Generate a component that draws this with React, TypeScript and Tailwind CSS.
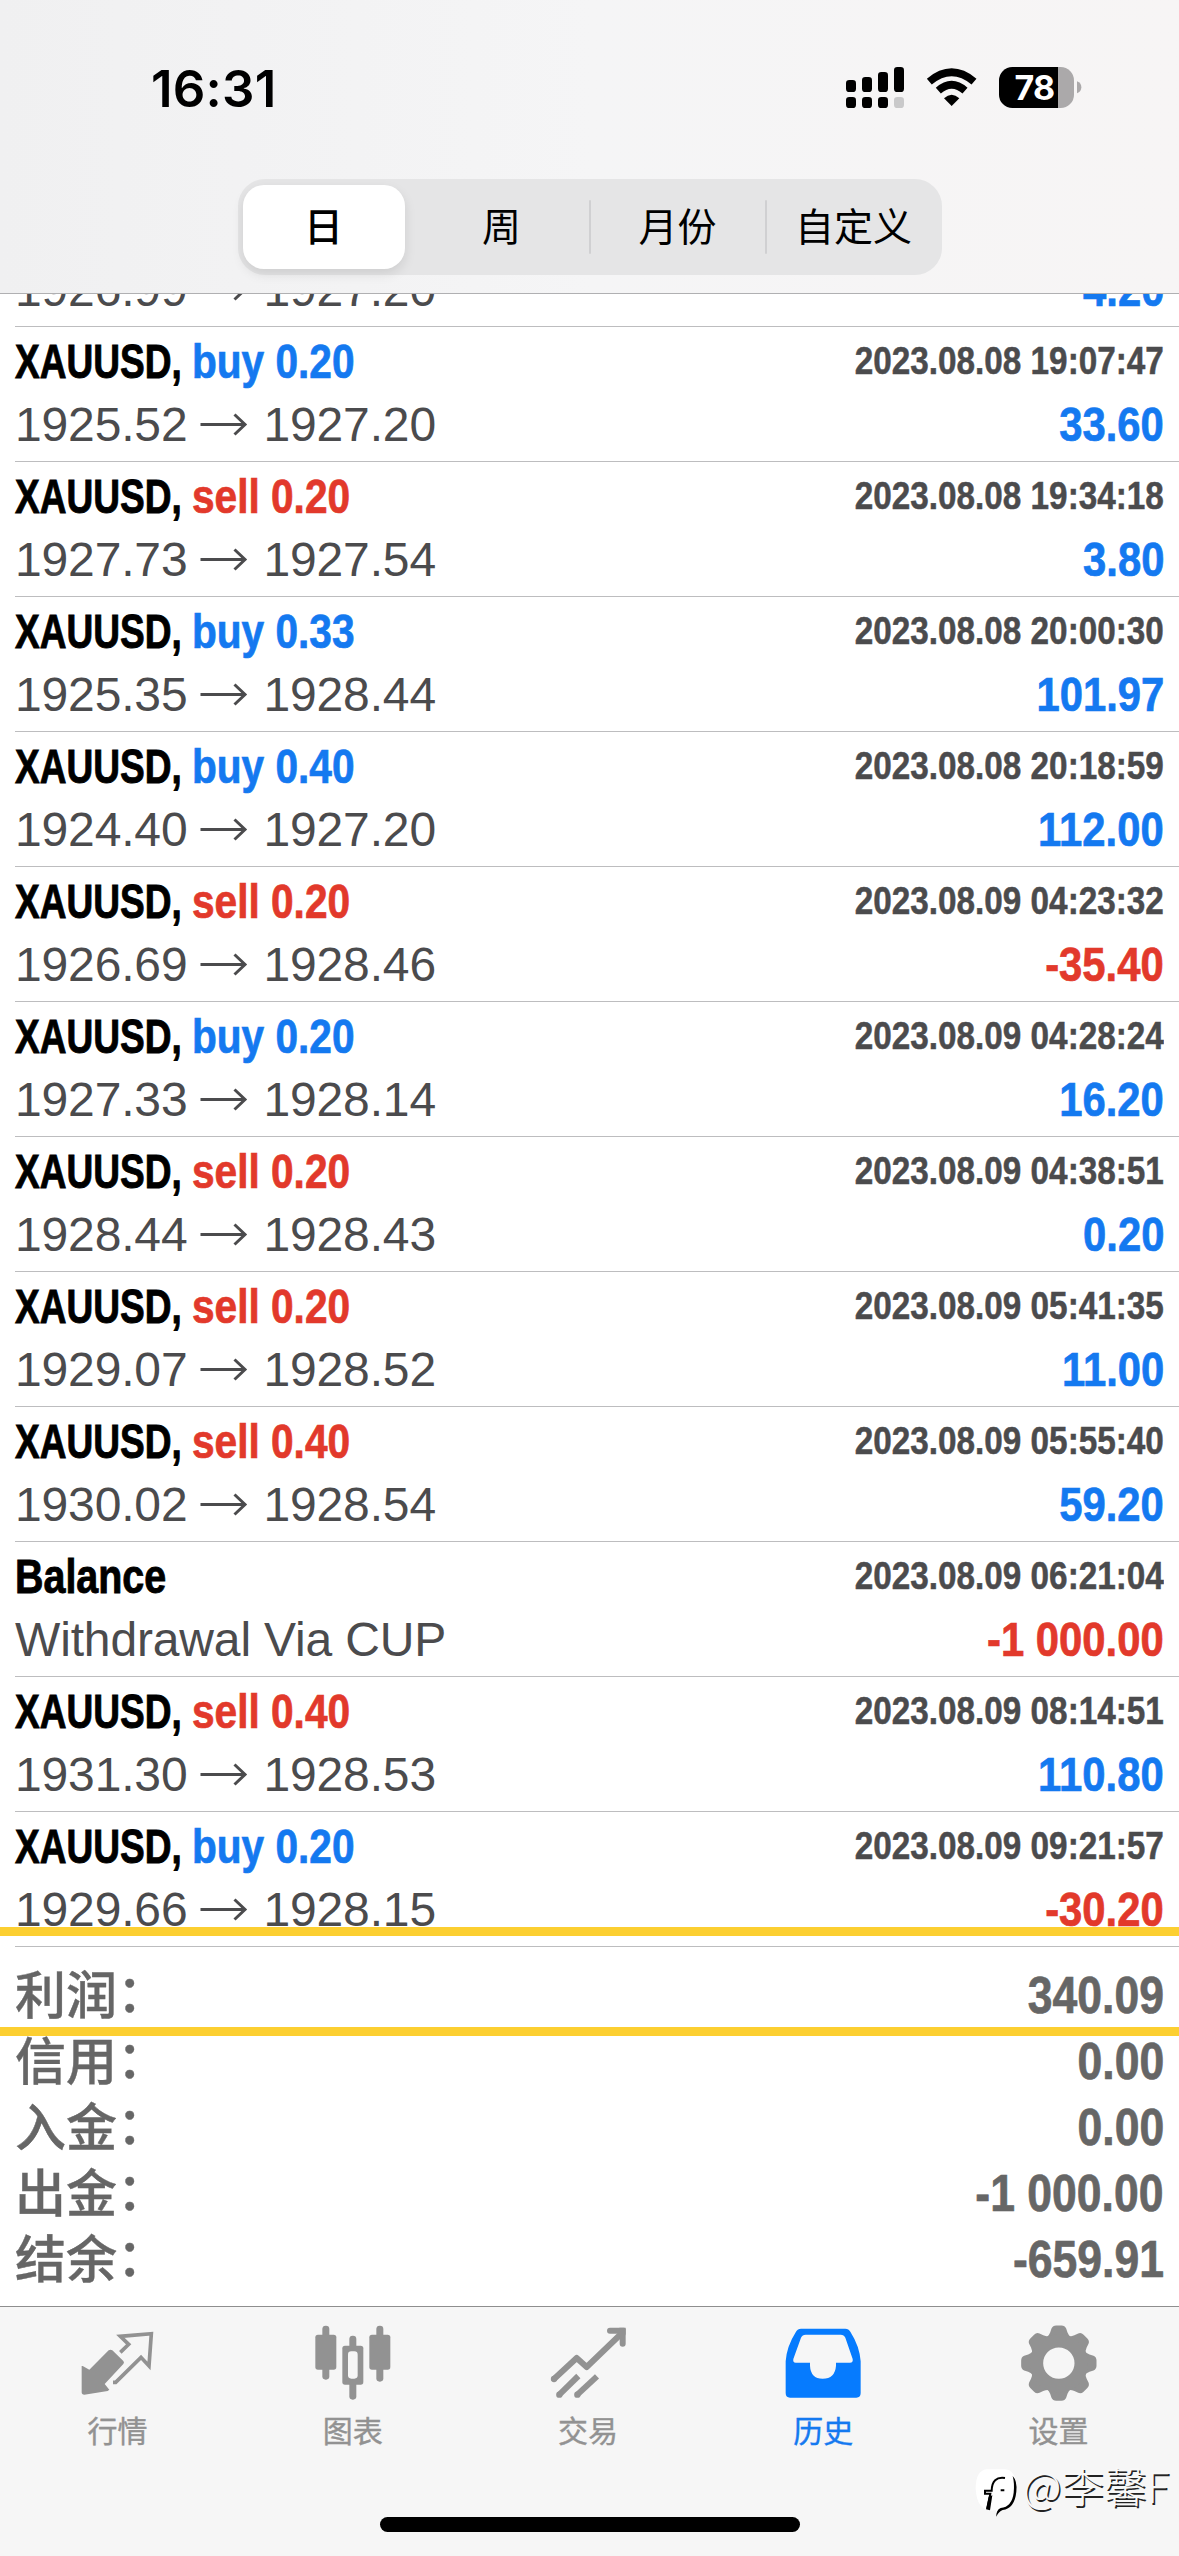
import type { ReactNode } from 'react'
import clsx from 'clsx'

type Deal = {
  side?: 'buy' | 'sell'
  volume?: string
  from?: string
  to?: string
  note?: string
  time: string
  profit: string
}

const deals: Deal[] = [
  { side: 'buy', volume: '0.20', from: '1926.99', to: '1927.20', time: '2023.08.08 18:52:10', profit: '4.20' },
  { side: 'buy', volume: '0.20', from: '1925.52', to: '1927.20', time: '2023.08.08 19:07:47', profit: '33.60' },
  { side: 'sell', volume: '0.20', from: '1927.73', to: '1927.54', time: '2023.08.08 19:34:18', profit: '3.80' },
  { side: 'buy', volume: '0.33', from: '1925.35', to: '1928.44', time: '2023.08.08 20:00:30', profit: '101.97' },
  { side: 'buy', volume: '0.40', from: '1924.40', to: '1927.20', time: '2023.08.08 20:18:59', profit: '112.00' },
  { side: 'sell', volume: '0.20', from: '1926.69', to: '1928.46', time: '2023.08.09 04:23:32', profit: '-35.40' },
  { side: 'buy', volume: '0.20', from: '1927.33', to: '1928.14', time: '2023.08.09 04:28:24', profit: '16.20' },
  { side: 'sell', volume: '0.20', from: '1928.44', to: '1928.43', time: '2023.08.09 04:38:51', profit: '0.20' },
  { side: 'sell', volume: '0.20', from: '1929.07', to: '1928.52', time: '2023.08.09 05:41:35', profit: '11.00' },
  { side: 'sell', volume: '0.40', from: '1930.02', to: '1928.54', time: '2023.08.09 05:55:40', profit: '59.20' },
  { note: 'Withdrawal Via CUP', time: '2023.08.09 06:21:04', profit: '-1 000.00' },
  { side: 'sell', volume: '0.40', from: '1931.30', to: '1928.53', time: '2023.08.09 08:14:51', profit: '110.80' },
  { side: 'buy', volume: '0.20', from: '1929.66', to: '1928.15', time: '2023.08.09 09:21:57', profit: '-30.20' },
]

const summary = [
  ['利润', '340.09'],
  ['信用', '0.00'],
  ['入金', '0.00'],
  ['出金', '-1 000.00'],
  ['结余', '-659.91'],
]

const periods = ['日', '周', '月份', '自定义']

const StatusIcons = () => (
  <svg width="250" height="65" viewBox="0 0 750 195">
    {/* Signal, two SIM lines */}
    <g fill="#000">
      <rect x="18" y="75" width="30" height="36" rx="10" />
      <rect x="66" y="66" width="30" height="45" rx="10" />
      <rect x="114" y="51" width="30" height="60" rx="10" />
      <rect x="162" y="36" width="30" height="75" rx="10" />
      <rect x="18" y="126" width="30" height="33" rx="10" />
      <rect x="66" y="126" width="30" height="33" rx="10" />
      <rect x="114" y="126" width="30" height="33" rx="10" />
      <rect x="162" y="126" width="30" height="33" rx="10" fill="#c9c9ca" />
    </g>
    {/* Wi-Fi */}
    <path d="M335 153L312 130Q335 108 358 130Z" fill="#000" />
    <path d="M295 107Q335 72 375 107" stroke="#000" strokeWidth="23" fill="none" />
    <path d="M268 80Q335 24 402 80" stroke="#000" strokeWidth="23" fill="none" />
    {/* Battery */}
    <clipPath id="battery">
      <rect x="477" y="36" width="225" height="123" rx="40" />
    </clipPath>
    <g clipPath="url(#battery)">
      <rect x="477" y="36" width="177" height="123" fill="#000" />
      <rect x="654" y="36" width="50" height="123" fill="#aba9aa" />
    </g>
    <path d="M711 79Q724 84 724 97Q724 110 711 115Z" fill="#aba9aa" />
    <text x="583" y="135" fill="#fff" fontSize="102" fontWeight="700" textAnchor="middle" letterSpacing="-3" className="font-['Inter',sans-serif]">
      78
    </text>
  </svg>
)

const QuotesIcon = () => (
  <svg width="80" height="80" viewBox="233 100 240 240">
    <path d="M247 229L267 240L325 182Q331 178 336 182L369 214Q373 219 369 223L313 283L327 300L322 304L252 315Q244 315 244 308V229Z" fill="#929292" />
    <path d="M360 188L385 164L360 140L453 132L446 229L422 203L346 278H338" fill="none" stroke="#929292" strokeWidth="11" />
  </svg>
)

const ChartIcon = () => (
  <svg width="80" height="80" viewBox="938 100 240 240" fill="#929292">
    <rect x="966" y="108" width="21" height="162" rx="10" />
    <rect x="945" y="135" width="63" height="105" rx="8" />
    <rect x="1128" y="108" width="21" height="168" rx="10" />
    <rect x="1107" y="135" width="63" height="105" rx="8" />
    <rect x="1047" y="138" width="21" height="192" rx="10" />
    <rect x="1026" y="168" width="63" height="117" rx="8" />
    <rect x="1043" y="185" width="29" height="82" rx="10" fill="#f6f6f6" />
  </svg>
)

const TradeIcon = () => (
  <svg width="80" height="80" viewBox="324 100 240 240" fill="none" stroke="#929292" strokeWidth="18">
    <path d="M342 268L410 205L440 232L546 130" strokeLinejoin="round" />
    <path d="M510 123H548V162" strokeLinecap="round" />
    <path d="M358 315L415 259" />
    <path d="M412 315L471 260" />
    <g fill="#929292" stroke="none">
      <circle cx="342" cy="268" r="9.5" />
      <circle cx="358" cy="315" r="9.5" />
      <circle cx="412" cy="315" r="9.5" />
      <rect x="534" y="114" width="23" height="24" rx="5" />
    </g>
  </svg>
)

const HistoryIcon = () => (
  <svg width="80" height="80" viewBox="1030 100 240 240">
    <path
      d="M1084 117H1217Q1227 117 1232 126Q1260 170 1263 215V310Q1263 324 1250 324H1051Q1038 324 1038 310V215Q1041 170 1069 126Q1074 117 1084 117ZM1098 135Q1088 135 1084 144L1061 208Q1059 219 1068 219H1111V228Q1113 267 1149 267Q1186 267 1189 228V219H1231Q1241 219 1239 208L1217 144Q1213 135 1203 135Z"
      fill="#067bfe"
      fillRule="evenodd"
    />
  </svg>
)

const SettingsIcon = () => (
  <svg width="80" height="80" viewBox="416 100 240 240" fill="#929292">
    <g transform="translate(538.5 220.5)">
      {[0, 45, 90, 135, 180, 225, 270, 315].map((deg) => (
        <path key={deg} transform={`rotate(${deg})`} d="M-36 -78Q-30 -82 -26 -92L-22 -104Q-18 -113 -8 -113H8Q18 -113 22 -104L26 -92Q30 -82 36 -78L30 -60H-30Z" />
      ))}
      <circle r="67" fill="none" stroke="#929292" strokeWidth="40" />
    </g>
  </svg>
)

const tabs: { label: string; icon: ReactNode; active?: boolean }[] = [
  { label: '行情', icon: <QuotesIcon /> },
  { label: '图表', icon: <ChartIcon /> },
  { label: '交易', icon: <TradeIcon /> },
  { label: '历史', icon: <HistoryIcon />, active: true },
  { label: '设置', icon: <SettingsIcon /> },
]

const Arrow = () => (
  <svg width="48" height="38" viewBox="0 0 48 38" fill="none" stroke="#4b4b4d" strokeWidth="3">
    <path d="M0.500 18.500H45M34.500 8.500L45 18.500L34.500 28.500" />
  </svg>
)

const DealRow = ({ deal }: { deal: Deal }) => (
  <div className="h-[135px] shrink-0 border-b border-[#bdbdbf] pt-[3px] pr-[15px] leading-[63px]">
    <div className="flex items-center justify-between font-bold whitespace-nowrap">
      <div className="flex text-[47.500px]">
        {deal.side ? (
          <>
            <span className="w-[177px] origin-left scale-x-[0.78] [-webkit-text-stroke:0.9px]">XAUUSD,</span>
            <span className={clsx('origin-left scale-x-[0.855] [-webkit-text-stroke:0.7px]', deal.side === 'buy' ? 'text-[#1479f0]' : 'text-[#e2392b]')}>
              {deal.side} {deal.volume}
            </span>
          </>
        ) : (
          <span className="origin-left scale-x-[0.83] [-webkit-text-stroke:0.9px]">Balance</span>
        )}
      </div>
      <span className="origin-right scale-x-[0.876] text-[38px] text-[#4b4b4d] [-webkit-text-stroke:0.5px]">{deal.time}</span>
    </div>
    <div className="flex items-center justify-between whitespace-nowrap">
      <div className="flex items-center text-[48px] tracking-[-0.150px] text-[#4b4b4d]">
        {deal.note ?? (
          <>
            <span>{deal.from}</span>
            <span className="mr-[15px] ml-[13px]">
              <Arrow />
            </span>
            <span>{deal.to}</span>
          </>
        )}
      </div>
      <span
        className={clsx(
          'origin-right scale-x-[0.88] text-[47.500px] font-bold [-webkit-text-stroke:0.7px]',
          deal.profit.startsWith('-') ? 'text-[#e2392b]' : 'text-[#1479f0]',
        )}
      >
        {deal.profit}
      </span>
    </div>
  </div>
)

export default function App() {
  return (
    <div className="relative flex h-[2556px] w-[1179px] flex-col overflow-hidden bg-white font-['Liberation_Sans','Noto_Sans_CJK_SC',sans-serif] text-black">
      {/* Header */}
      <header className="flex h-[294px] shrink-0 flex-col items-center border-b border-[#b0b0b2] bg-linear-to-r from-[#f0f0f1] via-[#f5f5f6] to-[#f7f5f5]">
        <div className="flex h-[179px] w-full shrink-0 items-start justify-between pt-[55px] pr-[89px] pl-[151px]">
          <span className="pt-[2px] font-['Inter',sans-serif] text-[51px] leading-[63px] font-semibold tracking-[0.200px]">16:31</span>
          <StatusIcons />
        </div>
        <div className="flex h-[96px] w-[704px] items-center rounded-[27px] bg-[#e5e5e6] font-['Noto_Sans_CJK_SC',sans-serif] text-[39px]">
          {periods.map((period, i) => (
            <div key={period} className="relative flex h-full flex-1 items-center justify-center">
              {i === 0 ? (
                <span className="mr-[9px] ml-[5px] flex h-[84px] flex-1 items-center justify-center rounded-[21px] bg-white pb-[5px] font-medium shadow-[0_5px_12px_rgba(0,0,0,0.1)]">
                  {period}
                </span>
              ) : (
                <span className="pb-[5px]">{period}</span>
              )}
              {(i === 1 || i === 2) && <span className="absolute right-[-1px] h-[54px] w-[2px] rounded bg-[#d0d0d2]" />}
            </div>
          ))}
        </div>
      </header>

      {/* Deals */}
      <main className="shrink-0 overflow-hidden pl-[15px]">
        <div className="-mt-[102px] flex flex-col">
          {deals.map((deal) => (
            <DealRow key={deal.time} deal={deal} />
          ))}
        </div>
      </main>

      {/* Summary */}
      <section className="flex-1 px-[15px] pt-[15px] text-[51px] leading-[66px] text-[#666]">
        {summary.map(([label, value]) => (
          <div key={label} className="flex h-[66px] items-center justify-between">
            <span className="flex pb-[6px] font-['Noto_Sans_CJK_SC',sans-serif] font-medium [-webkit-text-stroke:0.4px]">
              {label}
              <span className="-translate-y-[2px]">：</span>
            </span>
            <span className="origin-right scale-x-[0.873] pt-[2px] font-bold [-webkit-text-stroke:0.7px]">{value}</span>
          </div>
        ))}
      </section>

      {/* Tab bar */}
      <nav className="flex h-[250px] shrink-0 flex-col items-center border-t border-[#8e8e8e] bg-[#f6f6f6]">
        <div className="flex w-full pt-[16px] pr-[3px]">
          {tabs.map((tab) => (
            <div key={tab.label} className="flex flex-1 flex-col items-center">
              {tab.icon}
              <span
                className={clsx(
                  "mt-[8px] font-['Noto_Sans_CJK_SC',sans-serif] text-[30px] leading-[36px] [-webkit-text-stroke:0.4px]",
                  tab.active ? 'text-[#1479f0]' : 'text-[#929292]',
                )}
              >
                {tab.label}
              </span>
            </div>
          ))}
        </div>
        <div className="mt-auto mb-[24px] h-[15px] w-[420px] rounded-full bg-black" />
      </nav>

      {/* Highlight marks around the profit row */}
      <div className="absolute top-[1927px] left-0 h-[9px] w-full bg-[#fccf31]" />
      <div className="absolute top-[2027px] left-0 h-[9px] w-full bg-[#fccf31]" />

      {/* Watermark */}
      <div className="absolute top-[2457px] right-[10px] flex items-center gap-[3px] font-['Noto_Sans_CJK_SC',sans-serif] text-[42.500px] leading-[56px] font-light text-[#f8f8f8] [text-shadow:1.500px_1.500px_0_#222]">
        <svg width="46" height="56" viewBox="12 -9 138 168" className="overflow-visible">
          <path d="M50 28H105Q137 30 139 80Q140 135 95 150L78 168V150Q20 160 17 85Q17 32 50 28Z" fill="#fff" />
          <path d="M128 48Q142 62 139 95Q134 145 98 150Q86 155 79 170Q78 150 92 144Q126 140 131 98Q134 70 128 48Z" />
          <path d="M105 54Q66 48 65 92H45V101H61L52 146" fill="none" stroke="#000" strokeWidth="6" />
          <path d="M56 110L48 148L60 151L67 106ZM92 88H103V94H92Z" />
        </svg>
        <span>@李馨F</span>
      </div>
    </div>
  )
}
